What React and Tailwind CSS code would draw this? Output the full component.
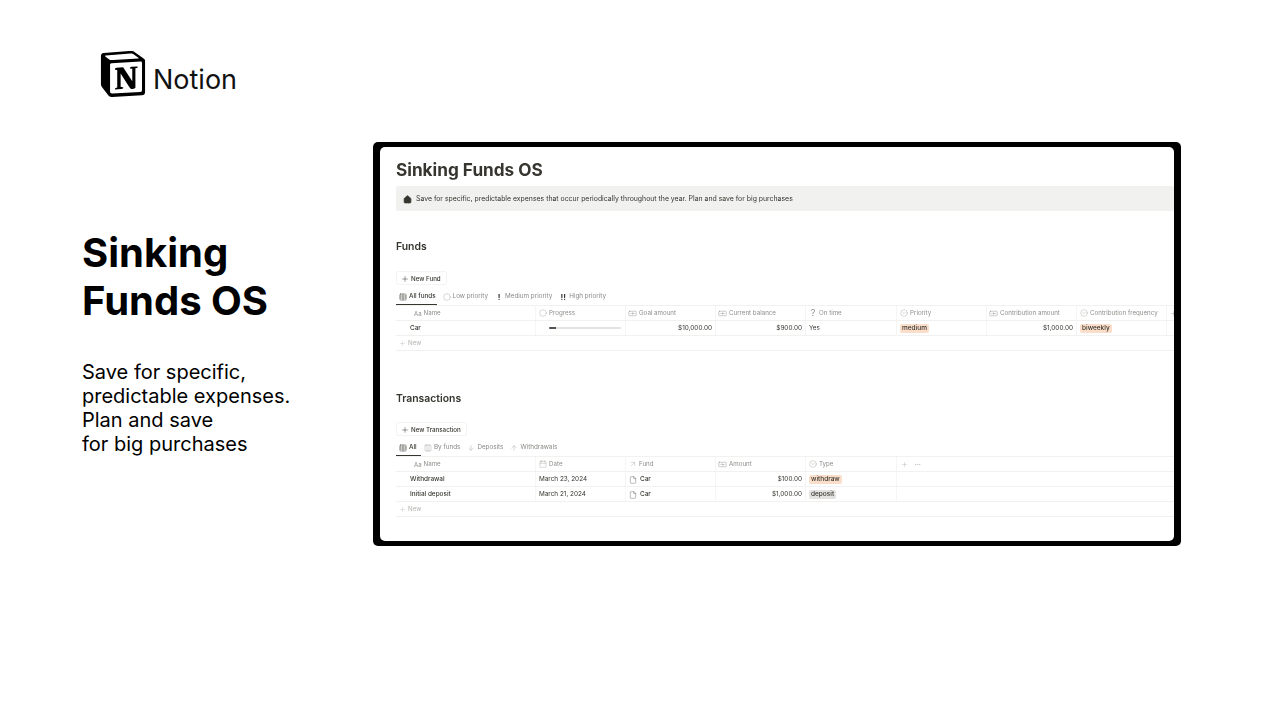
import React from "react";
import { SiNotion } from "react-icons/si";
import { Plus, Table, Circle, Columns3, ArrowDown, ArrowUp, ArrowUpRight, Calendar, File, CircleChevronDown, Banknote, House, Ellipsis } from "lucide-react";

const Tab = ({ icon, label, active, w }) => (
  <div className={`flex items-center gap-[2px] h-[18px] pt-[2px] pl-[3px] pr-[1px] border-b ${active ? "border-[#37352f] text-[#37352f] font-medium" : "border-transparent text-[#8a8985]"}`} style={w ? { width: w } : undefined}>
    {icon}
    <span className="whitespace-nowrap">{label}</span>
  </div>
);

const Tabs = ({ children }) => (
  <div className="flex items-center gap-[3px] text-[6.3px] h-[18px] mt-[2px]">{children}</div>
);

const I = { size: 8, strokeWidth: 1.5 };

const Head = ({ icon, label, first }) => (
  <div className={`flex items-center gap-[2px] text-[6.2px] text-[#8f8e8a] h-[14px] ${first ? "pl-[18px]" : "pl-[3px] border-l border-[#f5f5f3]"}`}>
    {icon}
    <span className="whitespace-nowrap">{label}</span>
  </div>
);

const Cell = ({ children, first, right }) => (
  <div className={`flex items-center pt-[1px] text-[6.4px] text-[#37352f] h-[14px] whitespace-nowrap ${first ? "pl-[14px] font-medium" : "pl-[3px] pr-[3px] border-l border-[#f5f5f3]"} ${right ? "justify-end" : ""}`}>
    {children}
  </div>
);

const Tag = ({ children, gray }) => (
  <span className={`px-[2px] -mt-[1px] rounded-[2px] leading-[9px] h-[9px] text-[6.5px] font-medium ${gray ? "bg-[#e3e2e0]" : "bg-[#fadec9]"}`}>{children}</span>
);

const Row = ({ children, cols }) => (
  <div className="grid border-b border-[#f1f1ef]" style={{ gridTemplateColumns: cols }}>{children}</div>
);

const NewRow = () => (
  <div className="flex items-center gap-[2px] h-[15px] pl-[3px] text-[6.2px] text-[#b4b3b0] border-b border-[#f1f1ef]">
    <Plus size={7} strokeWidth={1.2} />
    <span>New</span>
  </div>
);

const NewBtn = ({ label, w }) => (
  <div className="flex items-center gap-[2px] h-[14px] pt-[1px] pl-[4px] text-[6.2px] font-medium text-[#37352f] rounded-[2px] border border-[#f4f4f2] whitespace-nowrap" style={{ width: w }}>
    <Plus size={8} strokeWidth={1.5} />
    <span>{label}</span>
  </div>
);

const Money = () => <Banknote size={9} strokeWidth={1.2} className="-ml-[1px]" />;
const Sel = () => <CircleChevronDown size={8} strokeWidth={1} />;

const fundCols = "139px 90px 90px 90px 91px 90px 90px 90px 20px";
const txCols = "139px 90px 90px 90px 91px 90px 1fr";

export default function App() {
  return (
    <div className="flex w-[1280px] h-[720px] bg-white text-black overflow-hidden" style={{ fontFamily: "Inter, sans-serif" }}>
      <div className="w-[373px] shrink-0 pl-[82px] pt-[50px]">
        <div className="flex items-center ml-[18px] h-[47px]">
          <SiNotion size={46} />
          <span className="ml-[7px] mt-[12px] text-[27px] leading-[34px] text-[#111]">Notion</span>
        </div>
        <h1 className="mt-[132px] text-[40px] leading-[48px] font-bold">Sinking<br />Funds OS</h1>
        <p className="mt-[35px] text-[20px] leading-[24px]">Save for specific,<br />predictable expenses.<br />Plan and save<br />for big purchases</p>
      </div>
      <div className="pt-[142px]">
        <div className="w-[808px] h-[404px] bg-black rounded-[5px] px-[7px] py-[5px]">
          <div className="h-full bg-white rounded-[5px] overflow-hidden pl-[16px] pt-[13px] blur-[0.35px]">
            <div className="text-[17.2px] leading-[20px] font-bold text-[#37352f]">Sinking Funds OS</div>
            <div className="mt-[6px] h-[25px] flex items-center pt-[1px] bg-[#f1f1ef] pl-[7px] rounded-[2px] text-[6.9px] text-[#37352f]">
              <House size={9} fill="#37352f" stroke="#37352f" />
              <span className="ml-[4px] whitespace-nowrap">Save for specific, predictable expenses that occur periodically throughout the year. Plan and save for big purchases</span>
            </div>

            <div className="mt-[30px] text-[10.4px] leading-[12px] font-semibold text-[#37352f]">Funds</div>
            <div className="mt-[18px]"><NewBtn label="New Fund" w={51} /></div>
            <Tabs>
              <Tab active icon={<Table {...I} />} label="All funds" />
              <Tab icon={<Circle {...I} strokeWidth={1} />} label="Low priority" />
              <Tab icon={<span className="w-[8px] text-center font-bold text-[8px] text-[#37352f]">!</span>} label="Medium priority" />
              <Tab icon={<span className="w-[8px] text-center font-bold text-[8px] text-[#37352f]">!!</span>} label="High priority" />
            </Tabs>
            <div className="border-t border-[#f1f1ef]">
              <Row cols={fundCols}>
                <Head first icon={<span className="text-[6px]">Aa</span>} label="Name" />
                <Head icon={<Circle {...I} strokeWidth={1} />} label="Progress" />
                <Head icon={<Money />} label="Goal amount" />
                <Head icon={<Money />} label="Current balance" />
                <Head icon={<span className="w-[8px] text-center text-[9px] text-[#8f8e8a]">?</span>} label="On time" />
                <Head icon={<Sel />} label="Priority" />
                <Head icon={<Money />} label="Contribution amount" />
                <Head icon={<Sel />} label="Contribution frequency" />
                <Head icon={<Plus size={7} strokeWidth={1.2} />} label="" />
              </Row>
              <Row cols={fundCols}>
                <Cell first>Car</Cell>
                <Cell>
                  <div className="ml-[10px] -mt-[1px] w-[72px] h-[2px] bg-[#e3e2e0] rounded-full overflow-hidden"><div className="w-[7px] h-full bg-[#55534e]" /></div>
                </Cell>
                <Cell right>$10,000.00</Cell>
                <Cell right>$900.00</Cell>
                <Cell>Yes</Cell>
                <Cell><Tag>medium</Tag></Cell>
                <Cell right>$1,000.00</Cell>
                <Cell><Tag>biweekly</Tag></Cell>
                <Cell />
              </Row>
              <NewRow />
            </div>

            <div className="mt-[42px] text-[10.4px] leading-[12px] font-semibold text-[#37352f]">Transactions</div>
            <div className="mt-[17px]"><NewBtn label="New Transaction" w={71} /></div>
            <Tabs>
              <Tab active w={25} icon={<Table {...I} />} label="All" />
              <div className="-ml-[3px]"><Tab icon={<Columns3 {...I} strokeWidth={1} />} label="By funds" /></div>
              <Tab icon={<ArrowDown {...I} strokeWidth={1} />} label="Deposits" />
              <Tab icon={<ArrowUp {...I} strokeWidth={1} />} label="Withdrawals" />
            </Tabs>
            <div className="border-t border-[#f1f1ef]">
              <Row cols={txCols}>
                <Head first icon={<span className="text-[6px]">Aa</span>} label="Name" />
                <Head icon={<Calendar {...I} strokeWidth={1} />} label="Date" />
                <Head icon={<ArrowUpRight {...I} strokeWidth={1} />} label="Fund" />
                <Head icon={<Money />} label="Amount" />
                <Head icon={<Sel />} label="Type" />
                <div className="flex items-center gap-[6px] h-[14px] pl-[4px] text-[#a5a4a0] border-l border-[#f5f5f3]">
                  <Plus size={7} strokeWidth={1.2} />
                  <Ellipsis size={7} strokeWidth={1.2} />
                </div>
                <div />
              </Row>
              <Row cols={txCols}>
                <Cell first>Withdrawal</Cell>
                <Cell>March 23, 2024</Cell>
                <Cell><File size={8} strokeWidth={1} /><span className="ml-[3px] font-medium">Car</span></Cell>
                <Cell right>$100.00</Cell>
                <Cell><Tag>withdraw</Tag></Cell>
                <Cell />
                <div />
              </Row>
              <Row cols={txCols}>
                <Cell first>Initial deposit</Cell>
                <Cell>March 21, 2024</Cell>
                <Cell><File size={8} strokeWidth={1} /><span className="ml-[3px] font-medium">Car</span></Cell>
                <Cell right>$1,000.00</Cell>
                <Cell><Tag gray>deposit</Tag></Cell>
                <Cell />
                <div />
              </Row>
              <NewRow />
            </div>
          </div>
        </div>
      </div>
    </div>
  );
}
